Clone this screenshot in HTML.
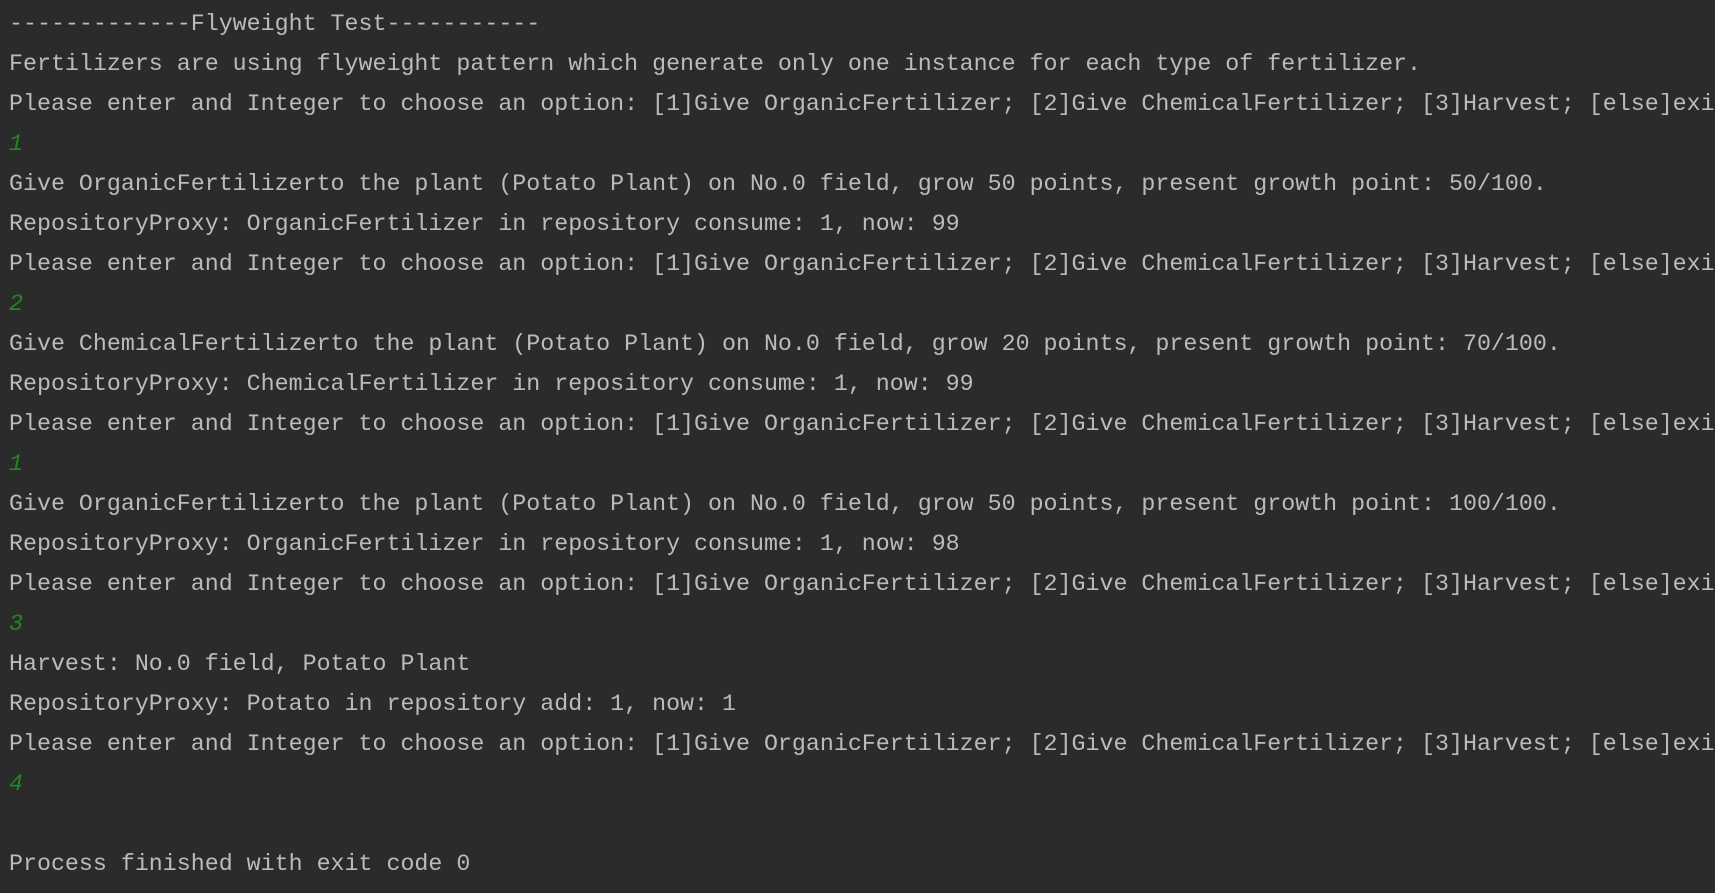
<!DOCTYPE html>
<html><head><meta charset="utf-8"><style>
html,body{margin:0;padding:0;background:#2b2b2b;width:1715px;height:893px;overflow:hidden}
pre{margin:0;position:absolute;left:9px;top:4px;font-family:"Liberation Mono","DejaVu Sans Mono",monospace;font-size:23.3px;line-height:40px;color:#bbbbbb;white-space:pre}
i{color:#1e8a1e;font-style:italic}
</style></head><body><pre>-------------Flyweight Test-----------
Fertilizers are using flyweight pattern which generate only one instance for each type of fertilizer.
Please enter and Integer to choose an option: [1]Give OrganicFertilizer; [2]Give ChemicalFertilizer; [3]Harvest; [else]exit
<i>1</i>
Give OrganicFertilizerto the plant (Potato Plant) on No.0 field, grow 50 points, present growth point: 50/100.
RepositoryProxy: OrganicFertilizer in repository consume: 1, now: 99
Please enter and Integer to choose an option: [1]Give OrganicFertilizer; [2]Give ChemicalFertilizer; [3]Harvest; [else]exit
<i>2</i>
Give ChemicalFertilizerto the plant (Potato Plant) on No.0 field, grow 20 points, present growth point: 70/100.
RepositoryProxy: ChemicalFertilizer in repository consume: 1, now: 99
Please enter and Integer to choose an option: [1]Give OrganicFertilizer; [2]Give ChemicalFertilizer; [3]Harvest; [else]exit
<i>1</i>
Give OrganicFertilizerto the plant (Potato Plant) on No.0 field, grow 50 points, present growth point: 100/100.
RepositoryProxy: OrganicFertilizer in repository consume: 1, now: 98
Please enter and Integer to choose an option: [1]Give OrganicFertilizer; [2]Give ChemicalFertilizer; [3]Harvest; [else]exit
<i>3</i>
Harvest: No.0 field, Potato Plant
RepositoryProxy: Potato in repository add: 1, now: 1
Please enter and Integer to choose an option: [1]Give OrganicFertilizer; [2]Give ChemicalFertilizer; [3]Harvest; [else]exit
<i>4</i>

Process finished with exit code 0
</pre></body></html>
